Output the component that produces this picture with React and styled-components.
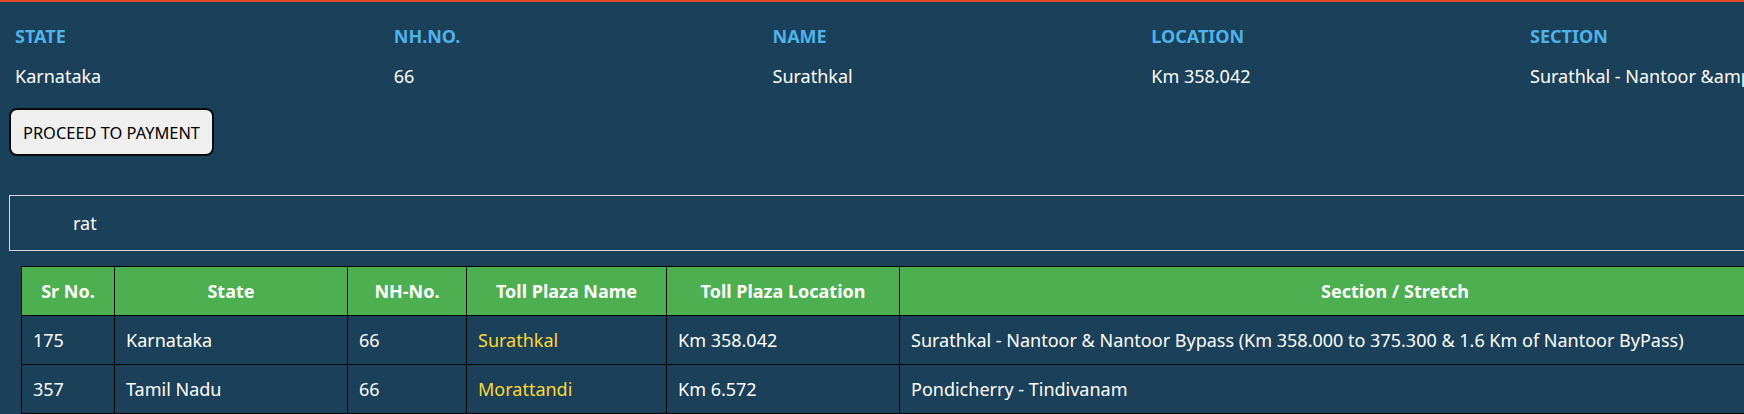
import React from "react"
import styled, { createGlobalStyle } from 'styled-components'

const plaza = {
    state: 'Karnataka',
    nh: '66',
    name: 'Surathkal',
    location: 'Km 358.042',
    section: 'Surathkal - Nantoor &amp; Nantoor Bypass (Km 358.000 to 375.300 &amp; 1.6 Km of Nantoor ByPass)',
}

const rows = [
    { sr: 175, state: 'Karnataka', nh: '66', name: 'Surathkal', location: 'Km 358.042', section: 'Surathkal - Nantoor & Nantoor Bypass (Km 358.000 to 375.300 & 1.6 Km of Nantoor ByPass)' },
    { sr: 357, state: 'Tamil Nadu', nh: '66', name: 'Morattandi', location: 'Km 6.572', section: 'Pondicherry - Tindivanam' },
]

const columns = [
    { title: 'Sr No.', width: 93 },
    { title: 'State', width: 233 },
    { title: 'NH-No.', width: 119 },
    { title: 'Toll Plaza Name', width: 200 },
    { title: 'Toll Plaza Location', width: 233 },
    { title: 'Section / Stretch', width: 991 },
]

export default function App(){
    return(
        <>
            <Global/>
            <Page>
                <Info>
                    <Field>
                        <Label>STATE</Label>
                        <Value>{plaza.state}</Value>
                    </Field>
                    <Field>
                        <Label>NH.NO.</Label>
                        <Value>{plaza.nh}</Value>
                    </Field>
                    <Field>
                        <Label>NAME</Label>
                        <Value>{plaza.name}</Value>
                    </Field>
                    <Field>
                        <Label>LOCATION</Label>
                        <Value>{plaza.location}</Value>
                    </Field>
                    <Field>
                        <Label>SECTION</Label>
                        <Value>{plaza.section}</Value>
                    </Field>
                </Info>

                <PayButton>PROCEED TO PAYMENT</PayButton>

                <Search defaultValue='rat'/>

                <Table>
                    <colgroup>
                        {columns.map(c => <col key={c.title} style={{width: c.width}}/>)}
                    </colgroup>
                    <thead>
                        <tr>
                            {columns.map(c => <Th key={c.title}>{c.title}</Th>)}
                        </tr>
                    </thead>
                    <tbody>
                        {rows.map(r => (
                            <tr key={r.sr}>
                                <Td>{r.sr}</Td>
                                <Td>{r.state}</Td>
                                <Td>{r.nh}</Td>
                                <Td $highlight>{r.name}</Td>
                                <Td>{r.location}</Td>
                                <Td>{r.section}</Td>
                            </tr>
                        ))}
                    </tbody>
                </Table>
            </Page>
        </>
    )
}

const Global = createGlobalStyle`
html, body{
    margin: 0;
    overflow: hidden;
    background: #1b405a;
}
body{
    font-family: "Noto Sans", "Open Sans", sans-serif;
    color: #fff;
}
`

const Page = styled.div`
    width: 1910px;
    min-height: 414px;
    border-top: 2px solid #e4492a;
    background: #1b405a;
`

const Info = styled.div`
    display: grid;
    grid-template-columns: repeat(5, 378.75px);
    padding: 24px 0 0 15px;
`

const Field = styled.div`
    display: flex;
    flex-direction: column;
    gap: 20px;
    white-space: nowrap;
`

const Label = styled.div`
    color: #4fb3ea;
    font-size: 18px;
    font-weight: bold;
    line-height: 20px;
`

const Value = styled.div`
    font-size: 18px;
    line-height: 20px;
`

const PayButton = styled.button`
    display: block;
    margin: 22px 0 0 9px;
    height: 48px;
    padding: 0 12px;
    background: #efefef;
    border: 2px solid #0a0a0a;
    border-radius: 8px;
    font-family: "Noto Sans", sans-serif;
    font-size: 16.4px;
    color: #000;
`

const Search = styled.input`
    display: block;
    box-sizing: border-box;
    margin: 39px 0 0 9px;
    width: 1900px;
    height: 56px;
    padding: 0 0 0 63px;
    background: transparent;
    border: 1px solid #d8d8d8;
    outline: none;
    color: #fff;
    font-family: "Noto Sans", sans-serif;
    font-size: 18px;
`

const Table = styled.table`
    margin: 15px 0 0 21px;
    border-collapse: collapse;
    table-layout: fixed;
    width: 1869px;
`

const Th = styled.th`
    height: 48px;
    padding: 0 11px;
    background: #4caf50;
    border: 1px solid #000;
    color: #fff;
    font-size: 18px;
    font-weight: bold;
    text-align: center;
`

const Td = styled.td`
    height: 48px;
    padding: 0 11px;
    border: 1px solid #000;
    color: ${p => p.$highlight ? '#fdd835' : '#fff'};
    font-size: 18px;
    text-align: left;
`
